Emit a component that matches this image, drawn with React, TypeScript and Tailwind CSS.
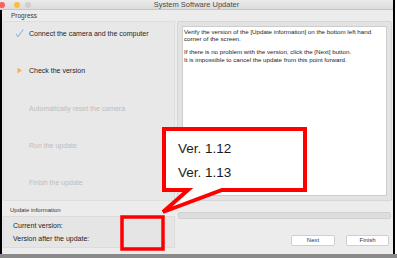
import React from 'react';

const steps = [
  { label: 'Connect the camera and the computer', state: 'done' },
  { label: 'Check the version', state: 'current' },
  { label: 'Automatically reset the camera', state: 'todo' },
  { label: 'Run the update', state: 'todo' },
  { label: 'Finish the update', state: 'todo' },
];

function StepIcon({ state }: { state: string }) {
  if (state === 'done') {
    return (
      <svg width="9" height="9" viewBox="0 0 9 9">
        <path d="M1.2 5.2 L3 7.8 L8 0.8" fill="none" stroke="#7fa9d6" strokeWidth="1" strokeLinecap="round" />
      </svg>
    );
  }
  if (state === 'current') {
    return (
      <svg width="9" height="9" viewBox="0 0 9 9">
        <path d="M2.5 1.5 L7 4.5 L2.5 7.5 Z" fill="#f6ad69" />
      </svg>
    );
  }
  return <span className="w-[9px] h-[9px]" />;
}

export default function App() {
  return (
    <div className="relative w-[397px] h-[258px] bg-white overflow-hidden font-['Liberation_Sans',Arial,sans-serif]">
      <div className="w-[395px] h-[254px] flex flex-col bg-[#ececec] border-r-2 border-black">
        {/* title bar */}
        <div className="relative h-[10px] flex items-center bg-gradient-to-b from-[#ebebeb] to-[#dcdcdc] border-b border-[#c6c6c6]">
          <div className="flex items-center gap-[5px]">
            <span className="w-[6px] h-[6px] rounded-full bg-[#fc605c] -ml-[1px]" />
            <span className="w-[6px] h-[6px] rounded-full bg-[#fdbc40] ml-[4px]" />
            <span className="w-[6px] h-[6px] rounded-full bg-[#cfcfcf]" />
          </div>
          <div className="absolute inset-0 flex items-center justify-center text-[7.5px] text-[#4b4b4b]">
            System Software Updater
          </div>
        </div>

        <div className="flex-1 flex flex-col border-l-2 border-black pl-[1px]">
          <div className="h-[11px] flex items-center pl-[8px] text-[6.5px] text-[#3a3a3a]">Progress</div>

          <div className="flex gap-[2px] h-[180px]">
            <div className="w-[172px] bg-[#e8e8e8] border border-[#dedede] flex flex-col pt-[7px] pl-[11px] gap-[28.3px]">
              {steps.map((s) => (
                <div key={s.label} className="h-[9px] flex items-center gap-[5px]">
                  <StepIcon state={s.state} />
                  <span
                    className={
                      s.state === 'todo'
                        ? 'text-[7px] text-[#bdbdbd] leading-none'
                        : 'text-[7px] text-[#1e1e1e] leading-none'
                    }
                  >
                    {s.label}
                  </span>
                </div>
              ))}
            </div>

            <div className="w-[215px] bg-[#e3e3e3] border border-[#d6d6d6] rounded-[2px] px-[4px] pt-[4px] pb-[4px]">
              <div className="h-full bg-white border border-[#cdcdcd] px-[1px] pt-[1px] text-[6.2px] leading-[7.4px] text-[#222] whitespace-nowrap overflow-hidden">
                <p>
                  Verify the version of the [Update information] on the bottom left hand
                  <br />
                  corner of the screen.
                </p>
                <p className="mt-[5.5px]">If there is no problem with the version, click the [Next] button.</p>
                <p>It is impossible to cancel the update from this point forward.</p>
              </div>
            </div>
          </div>

          <div className="flex gap-[2px] flex-1">
            <div className="w-[172px] flex flex-col">
              <div className="h-[15px] flex items-end pb-[1px] pl-[7px] text-[6px] text-[#3a3a3a]">Update information</div>
              <div className="h-[32px] bg-[#e5e5e5] border border-[#dcdcdc] flex flex-col justify-center gap-[5px] pl-[9px] text-[7px] leading-[8px] text-[#1e1e1e]">
                <div>Current version:</div>
                <div>Version after the update:</div>
              </div>
            </div>
            <div className="w-[215px] flex flex-col pt-[11px]">
              <div className="h-[7px] mx-[1px] bg-[#dddddd] border border-[#d0d0d0] rounded-[2px]" />
              <div className="flex justify-end gap-[11px] pr-[3px] mt-[16px]">
                <div className="w-[44px] h-[11px] bg-white border border-[#cfcfcf] rounded-[2px] flex items-center justify-center text-[6px] text-[#333]">Next</div>
                <div className="w-[43px] h-[11px] bg-white border border-[#cfcfcf] rounded-[2px] flex items-center justify-center text-[6px] text-[#333]">Finish</div>
              </div>
            </div>
          </div>
        </div>
      </div>
      <div className="h-[4px] bg-[#8a8a8a]" />

      {/* annotation callout */}
      <svg className="absolute inset-0 pointer-events-none" width="397" height="258" viewBox="0 0 397 258">
        <path d="M164 129 H305 V190 H222 L163 212 L188 190 H164 Z" fill="white" stroke="#ff0000" strokeWidth="4" strokeLinejoin="miter" />
        <rect x="122" y="217" width="41" height="32" fill="none" stroke="#ff0000" strokeWidth="3.5" />
      </svg>
      <div className="absolute left-[178px] top-[141px] flex flex-col gap-[8px] text-[13.5px] leading-[16px] text-[#1a1a1a]">
        <div>Ver. 1.12</div>
        <div>Ver. 1.13</div>
      </div>
    </div>
  );
}
